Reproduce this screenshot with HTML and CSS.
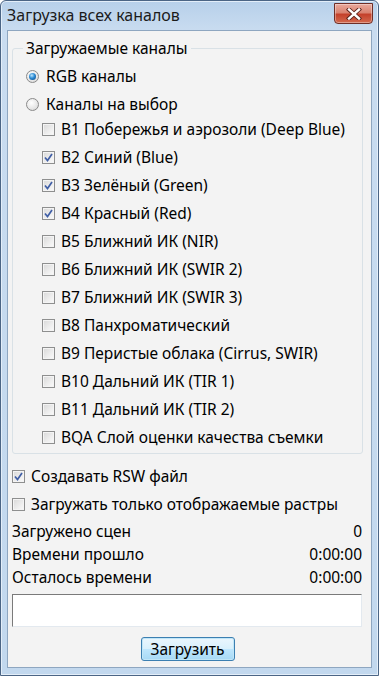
FILE: index.html
```html
<!DOCTYPE html>
<html lang="ru">

<head>
    <meta charset="UTF-8">
    <meta name="viewport" content="width=device-width, initial-scale=1.0">
    <title>Загрузка всех каналов</title>
    <link rel="stylesheet" href="styles.css">
</head>

<body>
    <div class="window">
        <!-- Title bar -->
        <div class="titlebar">
            <span class="title">Загрузка всех каналов</span>
            <button class="close-button" aria-label="Закрыть">
                <svg width="16" height="12" viewBox="0 0 16 12">
                    <path d="M3 1.5 L13 10.5 M13 1.5 L3 10.5" stroke="#5b231b" stroke-width="4.2" stroke-linecap="square" fill="none"/>
                    <path d="M3 1.5 L13 10.5 M13 1.5 L3 10.5" stroke="#ffffff" stroke-width="2.4" stroke-linecap="square" fill="none"/>
                </svg>
            </button>
        </div>

        <div class="client">
            <!-- Channel group -->
            <fieldset class="group">
                <legend>Загружаемые каналы</legend>
                <div class="row"><span class="radio checked"></span>RGB каналы</div>
                <div class="row"><span class="radio"></span>Каналы на выбор</div>

                <div class="channels">
                    <div class="row"><span class="check"></span>B1 Побережья и аэрозоли (Deep Blue)</div>
                    <div class="row"><span class="check checked"></span>B2 Синий (Blue)</div>
                    <div class="row"><span class="check checked"></span>B3 Зелёный (Green)</div>
                    <div class="row"><span class="check checked"></span>B4 Красный (Red)</div>
                    <div class="row"><span class="check"></span>B5 Ближний ИК (NIR)</div>
                    <div class="row"><span class="check"></span>B6 Ближний ИК (SWIR 2)</div>
                    <div class="row"><span class="check"></span>B7 Ближний ИК (SWIR 3)</div>
                    <div class="row"><span class="check"></span>B8 Панхроматический</div>
                    <div class="row"><span class="check"></span>B9 Перистые облака (Cirrus, SWIR)</div>
                    <div class="row"><span class="check"></span>B10 Дальний ИК (TIR 1)</div>
                    <div class="row"><span class="check"></span>B11 Дальний ИК (TIR 2)</div>
                    <div class="row"><span class="check"></span>BQA Слой оценки качества съемки</div>
                </div>
            </fieldset>

            <!-- Options -->
            <div class="options">
                <div class="row"><span class="check checked"></span>Создавать RSW файл</div>
                <div class="row"><span class="check"></span>Загружать только отображаемые растры</div>
            </div>

            <!-- Progress -->
            <div class="stats">
                <div class="stat"><span>Загружено сцен</span><span>0</span></div>
                <div class="stat"><span>Времени прошло</span><span>0:00:00</span></div>
                <div class="stat"><span>Осталось времени</span><span>0:00:00</span></div>
            </div>

            <div class="log"></div>

            <div class="actions">
                <button class="load-button">Загрузить</button>
            </div>
        </div>
    </div>
</body>

</html>
```

FILE: styles.css
```css
body {
    margin: 0;
    font-family: "Noto Sans", "Open Sans", sans-serif;
    font-size: 15.5px;
    color: #000;
    background-color: #fff;
}

.window {
    width: 379px;
    height: 676px;
    box-sizing: border-box;
    border: 1px solid #4b6585;
    border-radius: 6px 6px 0 0;
    background: linear-gradient(to bottom, #b7d0ea 0%, #c9dcf0 30px, #c2d8ee 100%);
    display: flex;
    flex-direction: column;
    box-shadow: inset 0 0 0 1px #e3eef9;
}

.titlebar {
    height: 29px;
    display: flex;
    align-items: center;
    justify-content: space-between;
    padding: 0 5px 0 6px;
}

.title {
    font-size: 16px;
    color: #1b1b1b;
    margin-top: -2px;
}

.close-button {
    width: 39px;
    height: 21px;
    margin-top: -4px;
    padding: 0;
    border: 1px solid #6f2e26;
    border-radius: 0 0 4px 4px;
    background: linear-gradient(to bottom, #e9a99c 0%, #d98371 45%, #c4412b 55%, #d36a4f 100%);
    box-shadow: inset 0 0 0 1px rgba(255, 255, 255, 0.35);
    display: flex;
    align-items: center;
    justify-content: center;
}

.client {
    flex: 1;
    margin: 0 6px 7px 6px;
    border: 1px solid #8ea6c0;
    background-color: #f3f3f3;
    padding: 7px 8px 0 4px;
    display: flex;
    flex-direction: column;
}

.group {
    margin: 0;
    padding: 4px 8px 2px 13px;
    border: 1px solid #d9e1e6;
    border-radius: 3px;
}

.group legend {
    line-height: 20px;
    padding: 0 3px;
    margin-left: -3px;
}

.row {
    height: 28px;
    display: flex;
    align-items: center;
    white-space: nowrap;
}

.channels {
    margin-top: -3px;
    padding-left: 16px;
}

.radio {
    width: 13px;
    height: 13px;
    box-sizing: border-box;
    border-radius: 50%;
    border: 1px solid #8a8a8a;
    background: radial-gradient(circle at 40% 35%, #ffffff 0%, #e6e6e6 60%, #cfcfcf 100%);
    margin-right: 7px;
    position: relative;
}

.radio.checked::after {
    content: "";
    position: absolute;
    left: 2px;
    top: 2px;
    width: 7px;
    height: 7px;
    border-radius: 50%;
    background: radial-gradient(circle at 40% 35%, #bfe6fb 0%, #2a8ad4 45%, #0d3d73 100%);
}

.check {
    width: 13px;
    height: 13px;
    box-sizing: border-box;
    border: 1px solid #8e8f8f;
    background: linear-gradient(135deg, #d8d8d8 0%, #eeeeee 60%, #fbfbfb 100%);
    box-shadow: inset 0 0 0 1px #f4f4f4;
    margin-right: 6px;
    position: relative;
}

.check.checked::after {
    content: "";
    position: absolute;
    left: 1px;
    top: 1px;
    width: 9px;
    height: 9px;
    background: url("data:image/svg+xml,%3Csvg xmlns='http://www.w3.org/2000/svg' width='9' height='9' viewBox='0 0 9 9'%3E%3Cpath d='M1 4.5 L3.5 7.5 L8 1' stroke='%23405fa6' stroke-width='1.7' fill='none'/%3E%3C/svg%3E") no-repeat;
}

.options {
    margin-top: 8px;
}

.stats {
    margin-top: 1px;
    padding-right: 1px;
}

.stat {
    height: 23px;
    display: flex;
    align-items: center;
    justify-content: space-between;
}

.log {
    margin-top: 6px;
    height: 33px;
    box-sizing: border-box;
    margin-right: 1px;
    background-color: #fff;
    border: 1px solid #e3e9ef;
    border-top-color: #7a7a7a;
    border-left-color: #7a7a7a;
}

.actions {
    display: flex;
    justify-content: center;
    margin-top: 10px;
}

.load-button {
    width: 94px;
    height: 24px;
    padding: 0;
    font-family: inherit;
    font-size: 15.5px;
    color: #000;
    border: 1px solid #3c7fb1;
    border-radius: 3px;
    background: linear-gradient(to bottom, #eaf6fd 0%, #d9f0fc 50%, #bee6fd 51%, #a7d9f5 100%);
    box-shadow: inset 0 0 0 1px #c0e6f8;
}
```
